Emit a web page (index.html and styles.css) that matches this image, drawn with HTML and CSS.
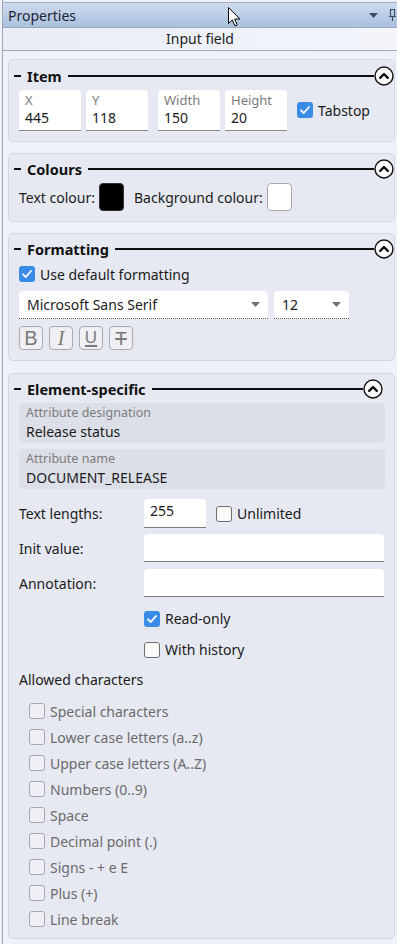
FILE: index.html
```html
<!DOCTYPE html>
<html>
<head>
<meta charset="utf-8">
<link rel="stylesheet" href="styles.css">
</head>
<body>
<div class="panel">
  <div class="titlebar">
    <span class="title">Properties</span>
    <span class="tb-icons">
      <svg class="tb-drop" width="9" height="5" viewBox="0 0 9 5"><path d="M0 0H9L4.5 5Z" fill="#3f4b5e"/></svg>
      <svg class="tb-pin" width="8" height="14" viewBox="0 0 8 14"><path d="M2.5 1.5H6.5V8.5H2.5Z M1 8.5H8 M4.5 8.5V13" fill="none" stroke="#3f4b5e" stroke-width="1.2"/></svg>
    </span>
  </div>
  <div class="subheader">Input field</div>
  <div class="content">
    <section class="group g-item">
      <div class="group-head">
        <span class="dash"></span><span class="gtitle">Item</span><span class="rule"></span>
        <svg class="collapse" width="20" height="20" viewBox="0 0 20 20"><circle cx="10" cy="10" r="9" fill="#fbfbfb" stroke="#111" stroke-width="1.4"/><path d="M6.2 11.8L10 8L13.8 11.8" fill="none" stroke="#111" stroke-width="2.4" stroke-linecap="round" stroke-linejoin="round"/></svg>
      </div>
      <div class="item-row">
        <div class="field f-x"><span class="flabel">X</span><span class="fval">445</span></div>
        <div class="field f-y"><span class="flabel">Y</span><span class="fval">118</span></div>
        <div class="field f-w"><span class="flabel">Width</span><span class="fval">150</span></div>
        <div class="field f-h"><span class="flabel">Height</span><span class="fval">20</span></div>
        <label class="check tabstop"><span class="cb on"><svg width="16" height="16" viewBox="0 0 16 16"><path d="M4 8.3L6.8 11L12 5" fill="none" stroke="#fff" stroke-width="1.8" stroke-linecap="round" stroke-linejoin="round"/></svg></span>Tabstop</label>
      </div>
    </section>

    <section class="group">
      <div class="group-head">
        <span class="dash"></span><span class="gtitle">Colours</span><span class="rule"></span>
        <svg class="collapse" width="20" height="20" viewBox="0 0 20 20"><circle cx="10" cy="10" r="9" fill="#fbfbfb" stroke="#111" stroke-width="1.4"/><path d="M6.2 11.8L10 8L13.8 11.8" fill="none" stroke="#111" stroke-width="2.4" stroke-linecap="round" stroke-linejoin="round"/></svg>
      </div>
      <div class="colour-row">
        <span class="clabel">Text colour:</span><span class="swatch black"></span>
        <span class="clabel bg-label">Background colour:</span><span class="swatch white"></span>
      </div>
    </section>

    <section class="group">
      <div class="group-head">
        <span class="dash"></span><span class="gtitle">Formatting</span><span class="rule"></span>
        <svg class="collapse" width="20" height="20" viewBox="0 0 20 20"><circle cx="10" cy="10" r="9" fill="#fbfbfb" stroke="#111" stroke-width="1.4"/><path d="M6.2 11.8L10 8L13.8 11.8" fill="none" stroke="#111" stroke-width="2.4" stroke-linecap="round" stroke-linejoin="round"/></svg>
      </div>
      <label class="check fmt-default"><span class="cb on"><svg width="16" height="16" viewBox="0 0 16 16"><path d="M4 8.3L6.8 11L12 5" fill="none" stroke="#fff" stroke-width="1.8" stroke-linecap="round" stroke-linejoin="round"/></svg></span>Use default formatting</label>
      <div class="drop-row">
        <div class="dropdown d-font"><span>Microsoft Sans Serif</span><svg width="9" height="5" viewBox="0 0 9 5"><path d="M0 0H9L4.5 5Z" fill="#707070"/></svg></div>
        <div class="dropdown d-size"><span>12</span><svg width="9" height="5" viewBox="0 0 9 5"><path d="M0 0H9L4.5 5Z" fill="#707070"/></svg></div>
      </div>
      <div class="btn-row">
        <span class="fbtn b-bold">B</span>
        <span class="fbtn b-ital">I</span>
        <span class="fbtn b-under">U</span>
        <span class="fbtn b-strike">T</span>
      </div>
    </section>

    <section class="group group-el">
      <div class="group-head">
        <span class="dash"></span><span class="gtitle">Element-specific</span><span class="rule"></span>
        <svg class="collapse" width="20" height="20" viewBox="0 0 20 20"><circle cx="10" cy="10" r="9" fill="#fbfbfb" stroke="#111" stroke-width="1.4"/><path d="M6.2 11.8L10 8L13.8 11.8" fill="none" stroke="#111" stroke-width="2.4" stroke-linecap="round" stroke-linejoin="round"/></svg>
      </div>
      <div class="attr"><span class="alabel">Attribute designation</span><span class="aval">Release status</span></div>
      <div class="attr"><span class="alabel">Attribute name</span><span class="aval">DOCUMENT_RELEASE</span></div>
      <div class="form-row r-len">
        <span class="rlabel">Text lengths:</span>
        <span class="input i-short">255</span>
        <label class="check"><span class="cb off"></span>Unlimited</label>
      </div>
      <div class="form-row">
        <span class="rlabel">Init value:</span>
        <span class="input i-long"></span>
      </div>
      <div class="form-row r-ann">
        <span class="rlabel">Annotation:</span>
        <span class="input i-long"></span>
      </div>
      <div class="opt-row opt-first"><label class="check"><span class="cb on"><svg width="16" height="16" viewBox="0 0 16 16"><path d="M4 8.3L6.8 11L12 5" fill="none" stroke="#fff" stroke-width="1.8" stroke-linecap="round" stroke-linejoin="round"/></svg></span>Read-only</label></div>
      <div class="opt-row"><label class="check"><span class="cb off"></span>With history</label></div>
      <div class="allowed">Allowed characters</div>
      <ul class="chars">
        <li><span class="cb dis"></span>Special characters</li>
        <li><span class="cb dis"></span>Lower case letters (a..z)</li>
        <li><span class="cb dis"></span>Upper case letters (A..Z)</li>
        <li><span class="cb dis"></span>Numbers (0..9)</li>
        <li><span class="cb dis"></span>Space</li>
        <li><span class="cb dis"></span>Decimal point (.)</li>
        <li><span class="cb dis"></span>Signs - + e E</li>
        <li><span class="cb dis"></span>Plus (+)</li>
        <li><span class="cb dis"></span>Line break</li>
      </ul>
    </section>
  </div>
</div>
<svg class="cursor" width="14" height="20" viewBox="0 0 14 20"><path d="M0.5 0.5V16.5L4.3 12.9L6.9 18.8L9.2 17.8L6.7 12H11.9Z" fill="#fff" stroke="#000" stroke-width="1" stroke-linejoin="round"/></svg>
</body>
</html>
```

FILE: styles.css
```css
* { box-sizing: border-box; }
html, body { margin: 0; padding: 0; }
body {
  width: 397px;
  height: 944px;
  overflow: hidden;
  position: relative;
  background: #eef1f9;
  font-family: "Noto Sans", "Open Sans", sans-serif;
  font-size: 14px;
  color: #1b1b1b;
}
.panel {
  margin-left: 2px;
  border-left: 1px solid #9ea7b6;
  height: 944px;
  background: #eef1f9;
  display: flex;
  flex-direction: column;
}
.titlebar {
  margin-top: 2px;
  height: 26px;
  flex: none;
  border-top: 1px solid #a8b3c3;
  border-bottom: 1px solid #9ca8ba;
  background: linear-gradient(#cfdbee, #a9c0de);
  display: flex;
  align-items: center;
  padding-left: 5px;
}
.title { font-size: 14px; color: #1e2430; }
.tb-icons { margin-left: auto; display: flex; align-items: center; gap: 10px; margin-right: 1px; }
.tb-drop { margin-top: 1px; }
.subheader {
  height: 23px;
  flex: none;
  border-bottom: 1px solid #a3a6ad;
  text-align: center;
  line-height: 22px;
  font-size: 14px;
  background: linear-gradient(90deg, #eaedf7, #f3f5fb);
}
.content {
  padding: 8px 2px 0 5px;
  display: flex;
  flex-direction: column;
  gap: 11px;
}
.group {
  background: #e6e9f1;
  border: 1px solid #d4d7df;
  border-radius: 5px;
  padding: 5px 9px 10px 10px;
}
.g-item { padding-top: 6px; }
.group-el { margin-top: 1px; padding-bottom: 6px; }
.group-head {
  height: 20px;
  display: flex;
  align-items: center;
  margin: 0 -9px 0 -5px;
}
.group-el .group-head { margin-right: 2px; }
.dash { width: 7px; height: 1.5px; background: #111; margin-right: 6px; }
.gtitle { font-weight: bold; font-size: 14.5px; color: #111; line-height: 20px; }
.rule { flex: 1; height: 1.5px; background: #111; margin-left: 6px; }
.collapse { display: block; flex: none; }

.item-row { display: flex; align-items: center; margin-top: 4px; height: 41px; }
.field {
  width: 62px;
  height: 41px;
  background: #fff;
  border-radius: 4px 4px 0 0;
  border-bottom: 1px solid #8a8a8a;
  padding: 1px 0 0 6px;
  display: flex;
  flex-direction: column;
  line-height: 18px;
}
.flabel { color: #7b7b7b; font-size: 13px; }
.fval { font-size: 14px; }
.f-y { margin-left: 5px; }
.f-w { margin-left: 10px; }
.f-h { margin-left: 5px; }
.check { display: flex; align-items: center; gap: 5px; }
.tabstop { margin-left: 10px; margin-top: -1px; }
.cb {
  width: 16px;
  height: 16px;
  border-radius: 3px;
  flex: none;
  display: block;
}
.cb svg { display: block; }
.cb.on { background: #3a8ce6; }
.cb.off { background: #fbfbfb; border: 1.5px solid #6e6e6e; }
.cb.dis { background: #eef0f5; border: 1.5px solid #a7a7a9; }

.colour-row { display: flex; align-items: center; margin-top: 4px; height: 28px; }
.swatch {
  width: 25px;
  height: 28px;
  border-radius: 4px;
  margin-left: 4px;
}
.swatch.black { background: #000; border: 1px solid #333; }
.swatch.white { background: #fff; border: 1px solid #a9a9a9; }
.bg-label { margin-left: 10px; }

.fmt-default { height: 20px; margin-top: 5px; }
.drop-row { display: flex; gap: 6px; margin-top: 7px; }
.dropdown {
  height: 28px;
  background: #fff;
  border-radius: 4px 4px 0 0;
  border-bottom: 1px dotted #5e5e5e;
  display: flex;
  align-items: center;
  padding: 0 8px 0 8px;
}
.dropdown svg { margin-left: auto; }
.d-font { width: 249px; }
.d-size { width: 75px; }
.btn-row { display: flex; gap: 6px; margin-top: 7px; }
.fbtn {
  width: 24px;
  height: 24px;
  border: 1px solid #ababab;
  border-radius: 4px;
  background: #eff0f3;
  display: flex;
  align-items: center;
  justify-content: center;
  font-family: "Liberation Sans", sans-serif;
  font-size: 20px;
  line-height: 1;
  color: #7a7a7a;
}
.b-ital { font-style: italic; font-family: "Liberation Serif", serif; font-size: 20px; }
.b-under { text-decoration: underline; text-decoration-thickness: 1.5px; text-underline-offset: 2px; font-size: 17px; padding-bottom: 2px; }
.b-strike { text-decoration: line-through; text-decoration-thickness: 1.5px; font-size: 19px; }

.attr {
  height: 40px;
  margin-top: 4px;
  background: #dcdfe7;
  border-radius: 4px;
  padding: 0 0 0 7px;
  display: flex;
  flex-direction: column;
  justify-content: center;
  line-height: 19px;
  padding-bottom: 2px;
}
.attr + .attr { margin-top: 6px; }
.alabel { color: #7c7c7c; font-size: 12.5px; }
.aval { font-size: 14px; }
.form-row { display: flex; align-items: center; margin-top: 6px; }
.r-len { margin-top: 10px; }
.r-ann { margin-top: 7px; }
.rlabel { width: 125px; flex: none; }
.input {
  height: 28px;
  background: #fff;
  border-radius: 4px 4px 0 0;
  border-bottom: 1px solid #7c7c7c;
  padding: 2px 0 0 6px;
}
.r-len .input { height: 29px; }
.i-short { width: 62px; margin-right: 10px; }
.i-long { width: 240px; }
.opt-row { height: 31px; display: flex; align-items: center; padding-left: 125px; }
.opt-first { margin-top: 6px; }
.allowed { height: 30px; line-height: 30px; }
.chars { list-style: none; margin: 3px 0 0 0; padding: 0 0 0 10px; }
.chars li { height: 26px; display: flex; align-items: center; gap: 5px; color: #6b6b6b; }

.cursor { position: absolute; left: 228px; top: 7px; }
```
